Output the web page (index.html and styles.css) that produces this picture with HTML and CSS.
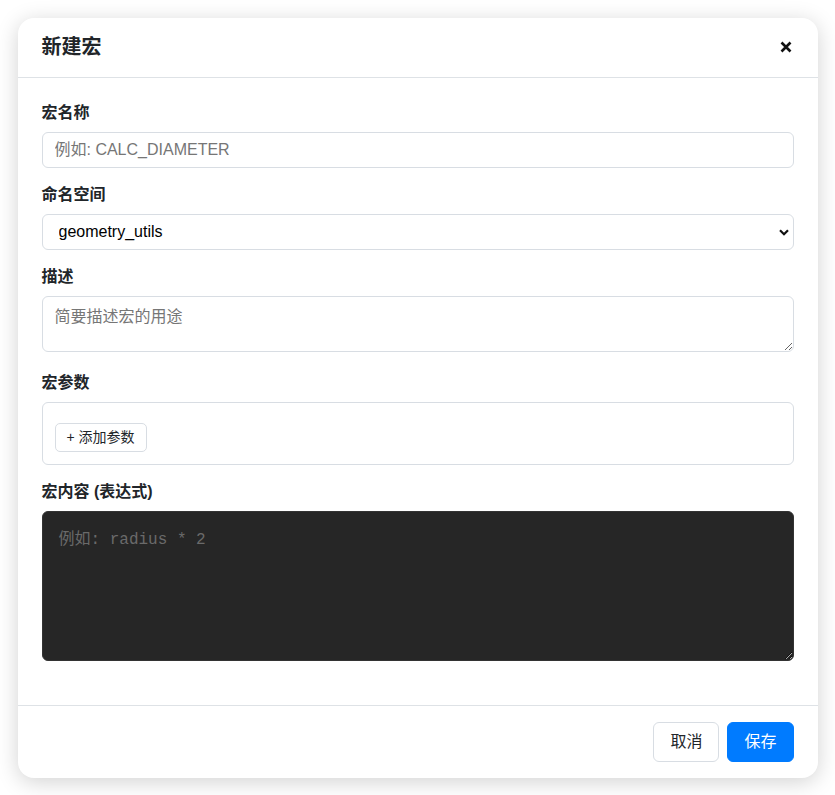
FILE: index.html
```html
<!DOCTYPE html>
<html lang="zh-CN">
<head>
    <meta charset="UTF-8">
    <meta name="viewport" content="width=device-width, initial-scale=1.0">
    <title>新建宏</title>
    <link rel="stylesheet" href="styles.css">
</head>
<body>

    <div class="modal">
        <div class="modal-header">
            <h2>新建宏</h2>
            <button class="close-btn" title="关闭">
                <svg width="12" height="12" viewBox="0 0 12 12">
                    <path d="M1.5 1.5 L10.5 10.5 M10.5 1.5 L1.5 10.5" stroke="#111" stroke-width="2.6" fill="none"/>
                </svg>
            </button>
        </div>

        <div class="modal-body">
            <div class="form-group">
                <label for="macro-name">宏名称</label>
                <input id="macro-name" class="form-control" type="text" placeholder="例如: CALC_DIAMETER">
            </div>

            <div class="form-group">
                <label for="macro-ns">命名空间</label>
                <div class="select-wrap">
                    <select id="macro-ns" class="form-control">
                        <option>geometry_utils</option>
                        <option>math_core</option>
                    </select>
                    <!-- flecha del select -->
                    <svg class="select-arrow" width="10" height="7" viewBox="0 0 10 7">
                        <path d="M1 1.2 L5 5.2 L9 1.2" stroke="#111" stroke-width="2.2" fill="none"/>
                    </svg>
                </div>
            </div>

            <div class="form-group">
                <label for="macro-desc">描述</label>
                <textarea id="macro-desc" class="form-control desc" placeholder="简要描述宏的用途"></textarea>
            </div>

            <div class="form-group">
                <label>宏参数</label>
                <div class="params-box">
                    <div class="params-list"></div>
                    <button class="btn-small">+ 添加参数</button>
                </div>
            </div>

            <div class="form-group">
                <label for="macro-body">宏内容 (表达式)</label>
                <textarea id="macro-body" class="code-editor" placeholder="例如: radius * 2"></textarea>
            </div>
        </div>

        <div class="modal-footer">
            <button class="btn btn-secondary">取消</button>
            <button class="btn btn-primary">保存</button>
        </div>
    </div>

</body>
</html>
```

FILE: styles.css
```css
/* --- base --- */
body {
    margin: 0;
    height: 100vh;
    display: flex;
    align-items: center;
    justify-content: center;
    background: #fff;
    font-family: "Liberation Sans", "Noto Sans CJK SC", sans-serif;
    color: #212529;
}

/* --- ventana modal --- */
.modal {
    width: 800px;
    background: #fff;
    border-radius: 16px;
    box-shadow: 0 4px 22px rgba(0, 0, 0, 0.18);
    display: flex;
    flex-direction: column;
}

.modal-header {
    display: flex;
    align-items: center;
    justify-content: space-between;
    padding: 16px 24px;
    border-bottom: 1px solid #dee2e6;
}

.modal-header h2 {
    margin: 0;
    font-size: 20px;
    line-height: 27px;
    font-weight: 600;
}

.close-btn {
    background: none;
    border: none;
    padding: 4px;
    margin-right: -2px;
    cursor: pointer;
    display: flex;
}

.modal-body {
    padding: 24px 24px 24px;
}

/* --- campos --- */
.form-group {
    margin-bottom: 16px;
}

.form-group label {
    display: block;
    font-size: 16px;
    line-height: 22px;
    font-weight: 600;
    margin-bottom: 8px;
}

.form-control {
    width: 100%;
    box-sizing: border-box;
    padding: 8px 12px;
    font-family: inherit;
    font-size: 16px;
    line-height: 18px;
    color: #111;
    background: #fff;
    border: 1px solid #d8dde3;
    border-radius: 6px;
}

.form-control::placeholder {
    color: #767676;
}

.select-wrap {
    position: relative;
}

select.form-control {
    appearance: none;
    -webkit-appearance: none;
    height: 36px;
    padding-left: 16px;
    color: #000;
}

.select-arrow {
    position: absolute;
    right: 5px;
    top: 15px;
    pointer-events: none;
}

textarea.desc {
    height: 56px;
    line-height: 24px;
    resize: vertical;
}

/* --- parámetros --- */
.params-box {
    border: 1px solid #d8dde3;
    border-radius: 6px;
    padding: 12px;
}

.params-list {
    margin-bottom: 8px;
}

.btn-small {
    font-family: inherit;
    font-size: 14px;
    line-height: 19px;
    padding: 4px 11px;
    background: #fff;
    color: #212529;
    border: 1px solid #d8dde3;
    border-radius: 5px;
    cursor: pointer;
}

/* --- editor de expresiones --- */
.code-editor {
    width: 100%;
    height: 150px;
    box-sizing: border-box;
    padding: 16px;
    font-family: "Liberation Mono", "DejaVu Sans Mono", "Noto Sans CJK SC", monospace;
    font-size: 16px;
    line-height: 24px;
    color: #e0e0e0;
    background: #262626;
    border: 1px solid #333;
    border-radius: 6px;
}

.code-editor::placeholder {
    color: #6a6a6a;
}

/* --- pie --- */
.modal-footer {
    display: flex;
    justify-content: flex-end;
    gap: 8px;
    padding: 16px 24px;
    border-top: 1px solid #dee2e6;
}

.btn {
    font-family: inherit;
    font-size: 16px;
    line-height: 22px;
    padding: 8px 16px;
    border-radius: 6px;
    cursor: pointer;
}

.btn-secondary {
    background: #fff;
    color: #212529;
    border: 1px solid #d8dde3;
}

.btn-primary {
    background: #007bff;
    color: #fff;
    border: 1px solid #007bff;
}
```
